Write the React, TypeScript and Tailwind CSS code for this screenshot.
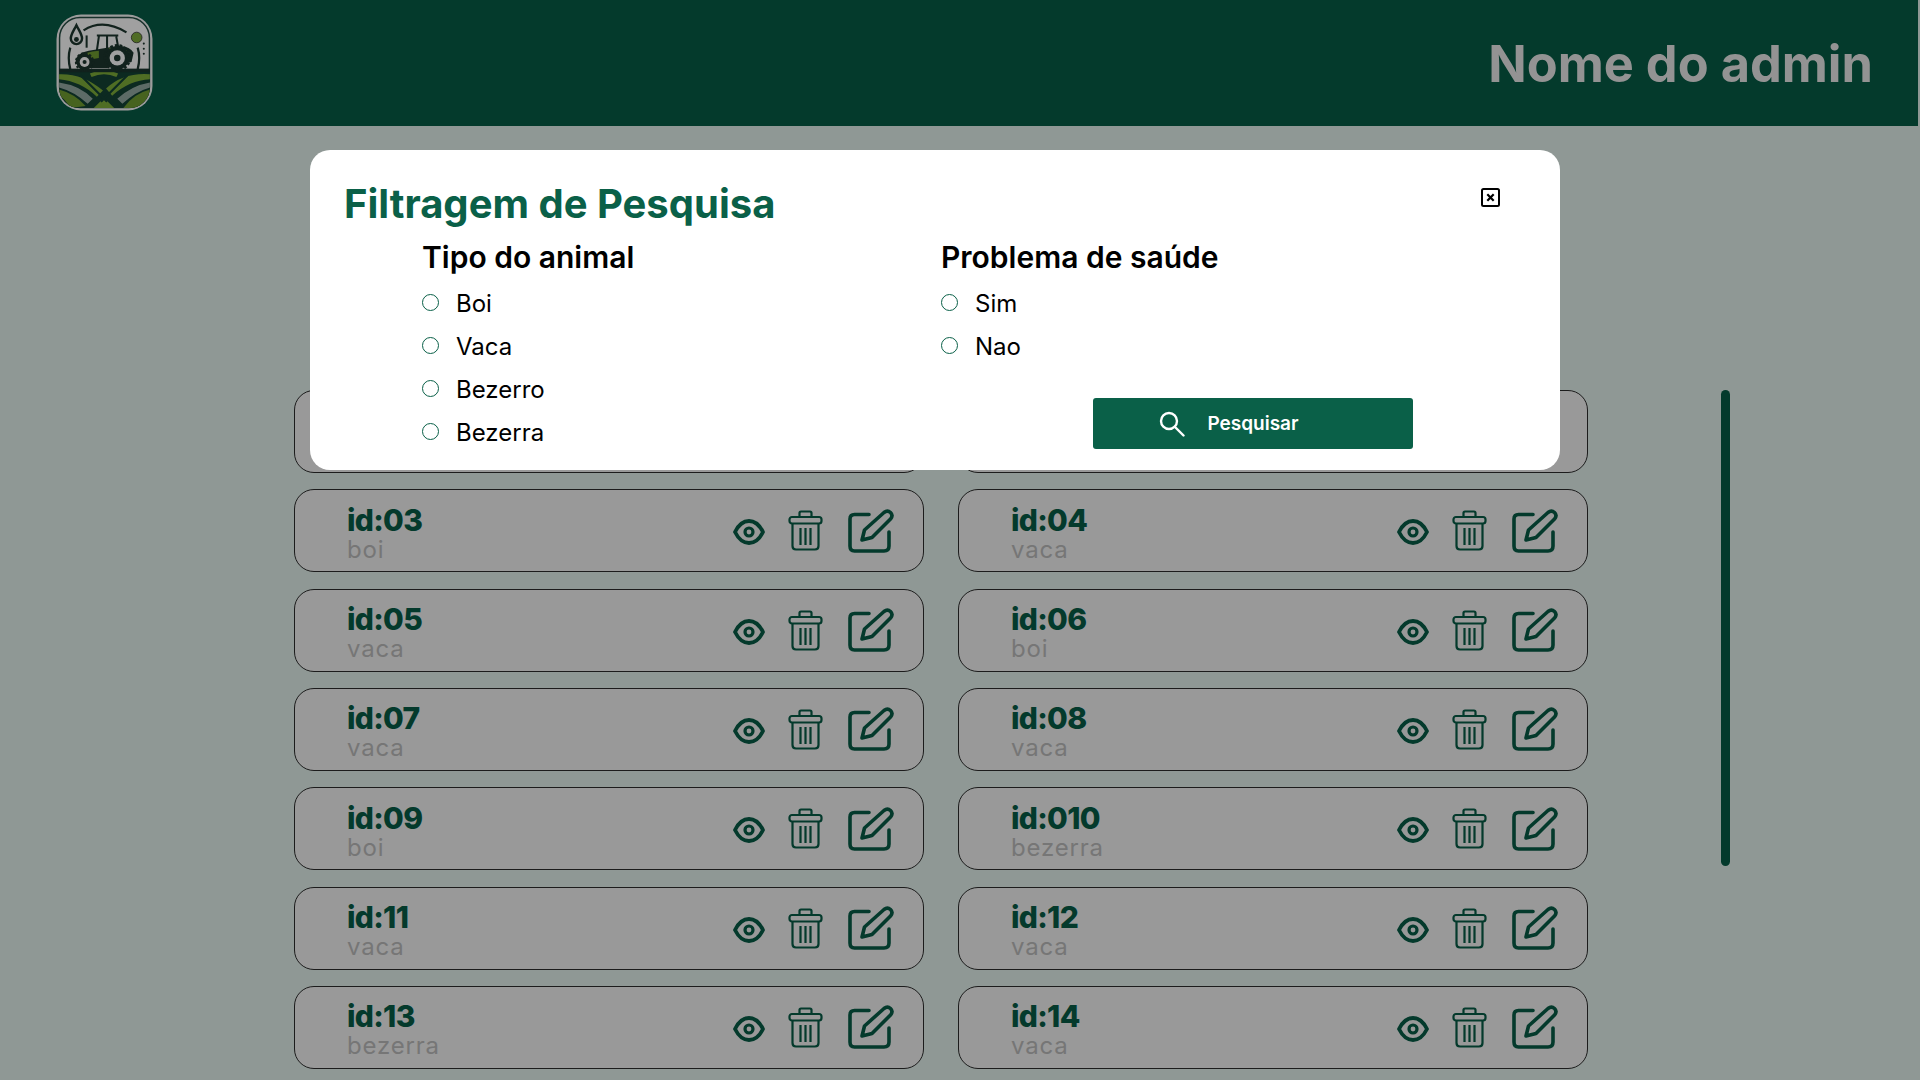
import React from "react";

const rows = [
  ["id:01", "boi", "id:02", "vaca"],
  ["id:03", "boi", "id:04", "vaca"],
  ["id:05", "vaca", "id:06", "boi"],
  ["id:07", "vaca", "id:08", "vaca"],
  ["id:09", "boi", "id:010", "bezerra"],
  ["id:11", "vaca", "id:12", "vaca"],
  ["id:13", "bezerra", "id:14", "vaca"],
];

function Logo() {
  return (
    <svg width="97" height="97" viewBox="0 0 95 95" className="shrink-0 -mt-[2px]">
      <defs>
        <clipPath id="logoClip"><rect x="3" y="3" width="89" height="89" rx="20" /></clipPath>
      </defs>
      <rect x="0.5" y="0.5" width="94" height="94" rx="24" fill="#9c9c9c" />
      <rect x="3.5" y="3.5" width="88" height="88" rx="20" fill="#a0a0a0" stroke="#17302a" strokeWidth="1.4" />
      <g clipPath="url(#logoClip)">
        <rect x="0" y="55" width="95" height="40" fill="#0c2a21" />
        <path d="M3 59 Q26 58 46 75 L40 81 Q24 66 3 64Z" fill="#4f6d24" />
        <path d="M92 59 Q66 57 49 73 L55 80 Q72 65 92 64Z" fill="#4f6d24" />
        <path d="M3 67 Q24 70 36 83 L31 88 Q18 76 3 72Z" fill="#a0a0a0" opacity="0.55" />
        <path d="M92 67 Q74 70 60 83 L65 88 Q78 76 92 72Z" fill="#a0a0a0" opacity="0.55" />
        <path d="M3 74 Q18 78 29 90 L14 92 Q8 82 3 80Z" fill="#47631f" />
        <path d="M92 74 Q76 78 66 92 L81 92 Q90 84 92 80Z" fill="#47631f" />
        <path d="M37 92 L47 82 L57 92Z" fill="#4f6d24" />
        <path d="M24 60 L50 86 M70 60 L44 86" stroke="#0c2a21" strokeWidth="2.2" />
        <path d="M34 60 Q47 54 60 60" stroke="#4f6d24" strokeWidth="4" fill="none" />
        <rect x="0" y="53.5" width="95" height="3.5" fill="#10221d" />
      </g>
      <path d="M20 11 C17 17 14.5 20 14.5 24 A5.5 5.5 0 0 0 25.5 24 C25.5 20 23 17 20 11Z" fill="none" stroke="#12221d" strokeWidth="2.4" />
      <circle cx="20" cy="25" r="2.4" fill="#12221d" />
      <path d="M27 16 Q46 4 69 18" fill="none" stroke="#12221d" strokeWidth="2.2" />
      <path d="M14 33 Q11 43 14 54 M80 33 Q83 43 80 54" fill="none" stroke="#12221d" strokeWidth="2.2" />
      <circle cx="79" cy="23" r="5.2" fill="#506c25" stroke="#222" strokeWidth="0.8" />
      <circle cx="86" cy="29" r="1" fill="#12221d" /><circle cx="86" cy="34" r="1" fill="#12221d" /><circle cx="86" cy="39" r="1" fill="#12221d" />
      <path d="M30 21 V33" stroke="#12221d" strokeWidth="2" />
      <path d="M40 21 H61 M42 22 L40 36 M59 22 L61 33 M50 22 V36" stroke="#12221d" strokeWidth="2" fill="none" />
      <path d="M19 47 Q20 38 32 36 L44 34 L62 31 Q73 32 76 38 L74 47 L50 53 L23 53Z" fill="#12221d" />
      <path d="M25 42 Q28 37 42 36 L42 43 L25 46Z" fill="#47631f" />
      <path d="M50 34 Q64 31 72 38 L58 38Z" fill="#47631f" />
      <circle cx="60" cy="43" r="11.5" fill="#12221d" stroke="#12221d" strokeWidth="4" strokeDasharray="2.5 1.8" />
      <circle cx="60" cy="43" r="7.5" fill="#a0a0a0" /><circle cx="60" cy="43" r="3.2" fill="#12221d" />
      <circle cx="28" cy="47" r="8" fill="#12221d" stroke="#12221d" strokeWidth="3" strokeDasharray="2.2 1.6" />
      <circle cx="28" cy="47" r="4.8" fill="#a0a0a0" /><circle cx="28" cy="47" r="2" fill="#12221d" />
    </svg>
  );
}

function Eye() {
  return (
    <svg width="32" height="26" viewBox="0 0 32 26" fill="none" stroke="#043a2c" strokeWidth="3.8" className="shrink-0 mt-[3px]">
      <path d="M2 13 C6 5 10.5 2 16 2 S26 5 30 13 C26 21 21.5 24 16 24 S6 21 2 13Z" strokeLinejoin="round" />
      <circle cx="16" cy="13" r="4" strokeWidth="3.2" />
    </svg>
  );
}

function Trash() {
  return (
    <svg width="35" height="41" viewBox="0 0 35 41" fill="none" stroke="#043a2c" strokeWidth="2.2" className="shrink-0">
      <path d="M11.5 7 V3 Q11.5 1.5 13 1.5 H22 Q23.5 1.5 23.5 3 V7" />
      <rect x="1.5" y="7" width="32" height="6.5" rx="2.5" />
      <path d="M4.5 13.5 V36 Q4.5 39.5 8 39.5 H27 Q30.5 39.5 30.5 36 V13.5" />
      <path d="M12.5 18 V35 M17.5 18 V35 M22.5 18 V35" />
    </svg>
  );
}

function Edit() {
  return (
    <svg width="46" height="44" viewBox="0 0 46 44" fill="none" stroke="#043a2c" strokeWidth="3.6" strokeLinecap="round" strokeLinejoin="round" className="shrink-0">
      <path d="M21 5.5 H6.5 Q2 5.5 2 10 V37 Q2 42 6.5 42 H36 Q41 42 41 37 V23" />
      <path d="M14 31 L16.5 21 L36 3.5 Q39.5 0.8 42.5 3.5 Q45.5 6.5 42.5 10 L24 28.5Z" />
    </svg>
  );
}

function Card({ id, kind }: { id: string; kind: string }) {
  return (
    <div className="h-[83px] rounded-[20px] border border-[#1c1c1c] bg-[#999999] flex items-center pl-[52px] pr-[29px]">
      <div className="flex flex-col flex-1 min-w-0 pt-[4px]">
        <span className="text-[30px] leading-[34px] font-extrabold tracking-[-0.7px] text-[#043a2c]">{id}</span>
        <span className="text-[24px] leading-[26px] text-[#767676] tracking-[0.8px]">{kind}</span>
      </div>
      <Eye />
      <div className="ml-[23px]"><Trash /></div>
      <div className="ml-[25px]"><Edit /></div>
    </div>
  );
}

function Radio({ label }: { label: string }) {
  return (
    <div className="h-[43px] flex items-center gap-[17px]">
      <span className="w-[17px] h-[17px] rounded-full border border-[#0a6048] bg-white shrink-0 -mt-[2px]" />
      <span className="text-[24px] leading-none text-black">{label}</span>
    </div>
  );
}

export default function App() {
  return (
    <div className="relative w-full h-screen overflow-hidden bg-[#8f9895] font-['Inter',sans-serif]">
      <header className="h-[126px] w-[1918px] bg-[#043a2c] flex items-center justify-between pl-[56px] pr-[45px]">
        <Logo />
        <span className="text-[50.5px] font-bold text-[#939393] leading-none mt-[2px]">Nome do admin</span>
      </header>

      <main className="flex pt-[264px] pl-[294px]">
        <div className="w-[1294px] grid grid-cols-2 gap-x-[34px] gap-y-[16.33px]">
          {rows.map((r) => (
            <React.Fragment key={r[0]}>
              <Card id={r[0]} kind={r[1]} />
              <Card id={r[2]} kind={r[3]} />
            </React.Fragment>
          ))}
        </div>
        <div className="ml-[133px] w-[9px] h-[476px] rounded-full bg-[#043a2c]" />
      </main>

      <section className="absolute left-[310px] top-[150px] w-[1250px] h-[320px] rounded-[20px] bg-white">
        <h1 className="absolute left-[34px] top-[32px] text-[40px] leading-[44px] font-bold text-[#0a6048]">Filtragem de Pesquisa</h1>
        <svg className="absolute left-[1171px] top-[38px]" width="19" height="19" viewBox="0 0 19 19" fill="none" stroke="#000" strokeWidth="2">
          <rect x="1" y="1" width="17" height="17" rx="1.5" />
          <path d="M6.3 6.3 L12.7 12.7 M12.7 6.3 L6.3 12.7" strokeWidth="2.2" />
        </svg>
        <div className="absolute left-[112px] top-[89px]">
          <h2 className="text-[30px] leading-[36px] font-semibold text-black mb-[7px]">Tipo do animal</h2>
          <Radio label="Boi" />
          <Radio label="Vaca" />
          <Radio label="Bezerro" />
          <Radio label="Bezerra" />
        </div>
        <div className="absolute left-[631px] top-[89px]">
          <h2 className="text-[30px] leading-[36px] font-semibold text-black mb-[7px]">Problema de saúde</h2>
          <Radio label="Sim" />
          <Radio label="Nao" />
        </div>
        <button className="absolute left-[783px] top-[248px] w-[320px] h-[51px] rounded-[3px] bg-[#0a6048] flex items-center justify-center gap-[22px] pr-[48px] text-white">
          <svg width="26" height="26" viewBox="0 0 26 26" fill="none" stroke="#fff" strokeWidth="2.4" strokeLinecap="round">
            <circle cx="10" cy="10" r="8" />
            <path d="M16 16 L24.5 24.5" />
          </svg>
          <span className="text-[19px] font-semibold leading-none">Pesquisar</span>
        </button>
      </section>
    </div>
  );
}
